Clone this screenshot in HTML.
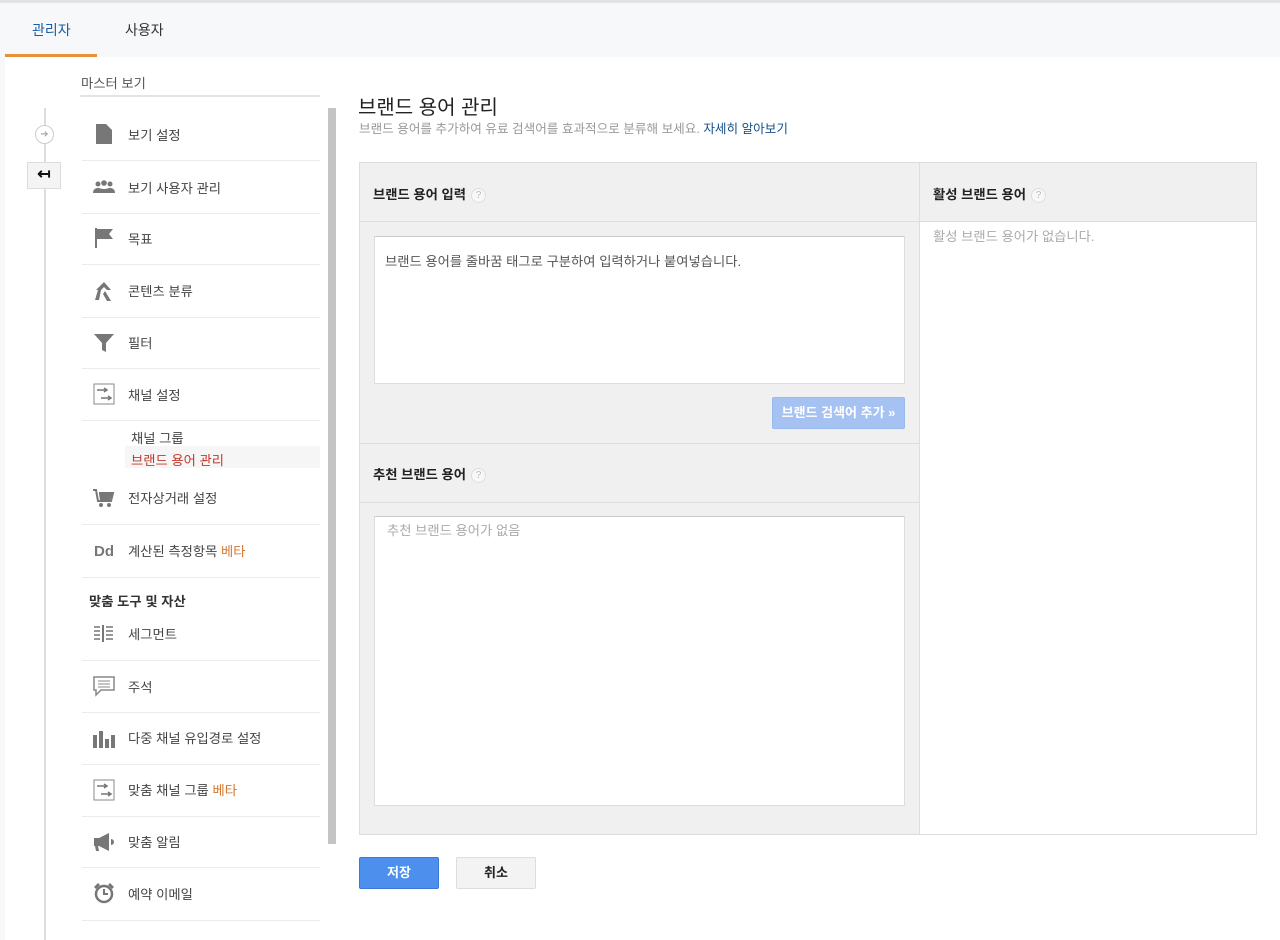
<!DOCTYPE html>
<html><head><meta charset="utf-8">
<style>
*{margin:0;padding:0;box-sizing:border-box}
body{width:1280px;height:940px;position:relative;overflow:hidden;background:#f7f8fa;font-family:"Liberation Sans","Noto Sans CJK KR",sans-serif;color:#333}
.a{position:absolute}
.t{font-size:13.3px;color:#444;white-space:nowrap}
.sep{position:absolute;left:82px;width:238px;height:1px;background:#ebebeb}
.ic{position:absolute;left:92px;width:24px;height:22px;fill:#777}
.q{display:inline-block;width:15px;height:15px;border:1px solid #ddd;border-radius:50%;font-size:10px;color:#bbb;text-align:center;line-height:13px;font-weight:normal;vertical-align:1px;margin-left:5px;background:#f7f7f7}
.beta{color:#d3772f}
</style></head><body>
<div class="a" style="left:0;top:0;width:1280px;height:3px;background:#e3e3e3"></div>
<div class="a t" style="left:32px;top:20px;font-size:14px;color:#1a5ea8">관리자</div>
<div class="a t" style="left:125px;top:20px;font-size:14px;color:#333">사용자</div>
<div class="a" style="left:5px;top:54px;width:92px;height:3px;background:#e8913a"></div>
<div class="a" style="left:5px;top:57px;width:1275px;height:883px;background:#fff"></div>

<div class="a t" style="left:81px;top:73px;color:#555">마스터 보기</div>
<div class="a" style="left:80px;top:95px;width:240px;height:2px;background:#e3e3e3"></div>
<div class="a" style="left:44px;top:108px;width:2px;height:832px;background:#ddd"></div>
<div class="a" style="left:35px;top:125px;width:19px;height:19px;border:1px solid #ccc;border-radius:50%;background:#fff;font-size:10px;color:#aaa;text-align:center;line-height:17px">➜</div>
<div class="a" style="left:27px;top:162px;width:34px;height:27px;border:1px solid #ddd;background:#f4f4f4;text-align:center;font-size:16px;line-height:24px;font-weight:bold;color:#111">↤</div>
<div class="a" style="left:328px;top:108px;width:8px;height:736px;background:#c4c4c4"></div>

<svg class="ic" style="top:123px" viewBox="0 0 24 22"><path d="M4 1h10l6 6v14H4z"/></svg>
<div class="a t" style="left:128px;top:125px">보기 설정</div>
<div class="sep" style="top:160px"></div>
<svg class="ic" style="top:177px" viewBox="0 0 24 22"><circle cx="6" cy="7" r="2.5"/><circle cx="12" cy="6" r="2.8"/><circle cx="18" cy="7" r="2.5"/><path d="M1 16c0-4 3-5 5-5s3 1 6 1 4-1 6-1 5 1 5 5z"/></svg>
<div class="a t" style="left:128px;top:178px">보기 사용자 관리</div>
<div class="sep" style="top:213px"></div>
<svg class="ic" style="top:227px" viewBox="0 0 24 22"><path d="M3 1h2v20H3z M5 2h16l-4 5 4 5H5z"/></svg>
<div class="a t" style="left:128px;top:229px">목표</div>
<div class="sep" style="top:264px"></div>
<svg class="ic" style="top:280px" viewBox="0 0 24 22"><path d="M12 2l7 8h-4l-3-3-3 3-2 10H3l3-10H4z M13 11l6 10h-4l-4-7z"/></svg>
<div class="a t" style="left:128px;top:281px">콘텐츠 분류</div>
<div class="sep" style="top:317px"></div>
<svg class="ic" style="top:332px" viewBox="0 0 24 22"><path d="M2 2h20l-8 9v9l-4-2v-7z"/></svg>
<div class="a t" style="left:128px;top:333px">필터</div>
<div class="sep" style="top:368px"></div>
<svg class="ic" style="top:383px" viewBox="0 0 24 22"><rect x="2" y="1" width="20" height="20" fill="none" stroke="#888"/><path d="M5 7h10M12 5l3 2-3 2M9 15h10M16 13l3 2-3 2" stroke="#777" fill="none" stroke-width="1.5"/></svg>
<div class="a t" style="left:128px;top:385px">채널 설정</div>
<div class="sep" style="top:420px"></div>
<div class="a t" style="left:131px;top:428px">채널 그룹</div>
<div class="a" style="left:125px;top:446px;width:195px;height:22px;background:#f6f6f6"></div>
<div class="a t" style="left:131px;top:450px;color:#c0392b">브랜드 용어 관리</div>
<svg class="ic" style="top:487px" viewBox="0 0 24 22"><path d="M1 3h3l2 11h13l2-8H7" fill="none" stroke="#777" stroke-width="2"/><path d="M7 7h13l-2 6H8z"/><circle cx="9" cy="18" r="2"/><circle cx="17" cy="18" r="2"/></svg>
<div class="a t" style="left:128px;top:488px">전자상거래 설정</div>
<div class="sep" style="top:524px"></div>
<div class="a" style="left:94px;top:543px;font-size:15px;font-weight:bold;color:#777">Dd</div>
<div class="a t" style="left:128px;top:541px">계산된 측정항목 <span class="beta">베타</span></div>
<div class="sep" style="top:577px"></div>
<div class="a t" style="left:89px;top:591px;font-weight:bold;color:#333">맞춤 도구 및 자산</div>
<svg class="ic" style="top:623px" viewBox="0 0 24 22"><path d="M2 4h6M2 8h6M2 12h6M2 16h6M14 4h7M14 8h7M14 12h7M14 16h7" stroke="#777" stroke-width="1.6"/><path d="M11 2v17" stroke="#777" stroke-width="2"/></svg>
<div class="a t" style="left:128px;top:624px">세그먼트</div>
<div class="sep" style="top:660px"></div>
<svg class="ic" style="top:675px" viewBox="0 0 24 22"><path d="M2 2h20v13H9l-5 5v-5H2z" fill="none" stroke="#888" stroke-width="1.5"/><path d="M6 6h12M6 9h12M6 12h12" stroke="#888"/></svg>
<div class="a t" style="left:128px;top:677px">주석</div>
<div class="sep" style="top:712px"></div>
<svg class="ic" style="top:727px" viewBox="0 0 24 22"><path d="M1 8h4v13H1zM7 4h4v17H7zM13 12h4v9h-4zM19 8h4v13h-4z"/></svg>
<div class="a t" style="left:128px;top:728px">다중 채널 유입경로 설정</div>
<div class="sep" style="top:764px"></div>
<svg class="ic" style="top:779px" viewBox="0 0 24 22"><rect x="2" y="1" width="20" height="20" fill="none" stroke="#888"/><path d="M5 7h10M12 5l3 2-3 2M9 15h10M16 13l3 2-3 2" stroke="#777" fill="none" stroke-width="1.5"/></svg>
<div class="a t" style="left:128px;top:780px">맞춤 채널 그룹 <span class="beta">베타</span></div>
<div class="sep" style="top:816px"></div>
<svg class="ic" style="top:831px" viewBox="0 0 24 22"><path d="M2 7h5l10-5v18L7 15H6l1 5H4l-1-5H2z M19 8a3 3 0 010 6z"/></svg>
<div class="a t" style="left:128px;top:832px">맞춤 알림</div>
<div class="sep" style="top:867px"></div>
<svg class="ic" style="top:882px" viewBox="0 0 24 22"><circle cx="12" cy="12" r="8" fill="none" stroke="#777" stroke-width="2.5"/><path d="M12 7v5h4" stroke="#777" stroke-width="2" fill="none"/><path d="M2 5l4-4 2 2-4 4zM22 5l-4-4-2 2 4 4z"/></svg>
<div class="a t" style="left:128px;top:884px">예약 이메일</div>
<div class="sep" style="top:920px"></div>

<div class="a" style="left:358px;top:91px;font-size:20px;color:#222;white-space:nowrap">브랜드 용어 관리</div>
<div class="a t" style="left:359px;top:118px;font-size:12.6px;color:#999">브랜드 용어를 추가하여 유료 검색어를 효과적으로 분류해 보세요. <span style="color:#15508a">자세히 알아보기</span></div>

<div class="a" style="left:359px;top:162px;width:898px;height:673px;border:1px solid #ddd;background:#f0f0f0"></div>
<div class="a" style="left:919px;top:162px;width:1px;height:673px;background:#ddd"></div>
<div class="a" style="left:920px;top:222px;width:336px;height:612px;background:#fff"></div>
<div class="a" style="left:360px;top:221px;width:896px;height:1px;background:#ddd"></div>
<div class="a t" style="left:373px;top:184px;font-weight:bold;color:#222">브랜드 용어 입력<span class="q">?</span></div>
<div class="a t" style="left:933px;top:184px;font-weight:bold;color:#222">활성 브랜드 용어<span class="q">?</span></div>
<div class="a t" style="left:933px;top:226px;color:#aaa">활성 브랜드 용어가 없습니다.</div>
<div class="a" style="left:374px;top:236px;width:531px;height:148px;background:#fff;border:1px solid #ddd;border-top-color:#ccc"></div>
<div class="a t" style="left:385px;top:251px;color:#555">브랜드 용어를 줄바꿈 태그로 구분하여 입력하거나 붙여넣습니다.</div>
<div class="a" style="left:772px;top:397px;width:133px;height:32px;background:#a5c2f3;border:1px solid #9ab9ef;border-radius:2px;color:#fff;font-size:13px;text-align:center;line-height:30px;font-weight:bold">브랜드 검색어 추가 »</div>
<div class="a" style="left:360px;top:443px;width:559px;height:1px;background:#ddd"></div>
<div class="a" style="left:360px;top:502px;width:559px;height:1px;background:#ddd"></div>
<div class="a t" style="left:373px;top:464px;font-weight:bold;color:#222">추천 브랜드 용어<span class="q">?</span></div>
<div class="a" style="left:374px;top:516px;width:531px;height:290px;background:#fff;border:1px solid #ddd;border-top-color:#ccc"></div>
<div class="a t" style="left:387px;top:520px;color:#aaa">추천 브랜드 용어가 없음</div>

<div class="a" style="left:359px;top:857px;width:80px;height:32px;background:#4d8fec;border:1px solid #3b78d8;border-radius:2px;color:#fff;font-size:13px;font-weight:bold;text-align:center;line-height:30px">저장</div>
<div class="a" style="left:456px;top:857px;width:80px;height:32px;background:#f3f3f3;border:1px solid #ddd;border-radius:2px;color:#222;font-size:13px;font-weight:bold;text-align:center;line-height:30px">취소</div>
</body></html>
